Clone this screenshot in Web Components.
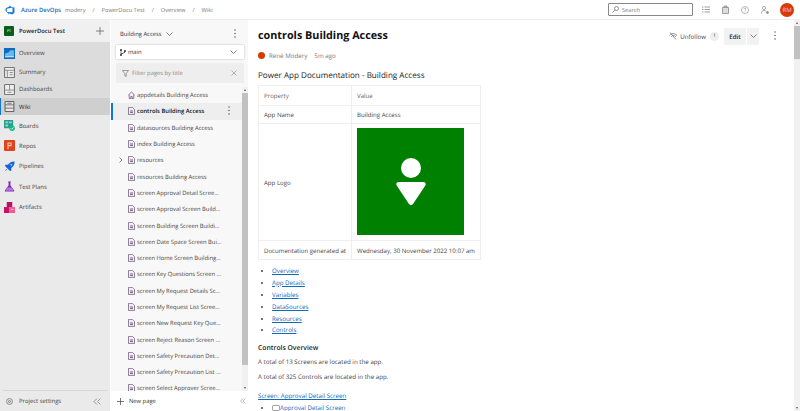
<!DOCTYPE html>
<html>
<head>
<meta charset="utf-8">
<title>Wiki</title>
<style>
  html, body { margin: 0; height: 100%; overflow: hidden; background: #fff; }
  body { font-family: "Open Sans", "Noto Sans", sans-serif; color: #333; display: flex; flex-direction: column; width: 800px; height: 411px; text-rendering: geometricPrecision; }
</style>
</head>
<body>

<app-header></app-header>

<app-shell>
  <nav-rail>
    <nav-item label="Overview" group top>
      <svg slot="icon" viewBox="0 0 10 10"><rect width="10" height="10" fill="#0f6cbd"/><path d="M1 8V5l3-1 2-2h3v6z" fill="#6bb7ee"/><path d="M1 8h8" stroke="#fff" stroke-width=".8"/></svg>
    </nav-item>
    <nav-item label="Summary" group>
      <svg slot="icon" viewBox="0 0 10 10" fill="none" stroke="#777"><rect x=".5" y=".5" width="9" height="9" rx=".5" fill="#eee"/><path d="M.5 3h9M3 3v6.5M5 5h3M5 7h3" stroke-width=".7"/></svg>
    </nav-item>
    <nav-item label="Dashboards" group>
      <svg slot="icon" viewBox="0 0 10 10" fill="none" stroke="#777"><rect x=".5" y=".5" width="9" height="9" rx=".5" fill="#eee"/><path d="M5 .5v5M.5 5.5h9M3 7.5h4" stroke-width=".7"/></svg>
    </nav-item>
    <nav-item label="Wiki" group selected>
      <svg slot="icon" viewBox="0 0 10 10" fill="none" stroke="#666"><rect x="1" y=".5" width="8" height="9" rx=".5" fill="#e6e6e6"/><path d="M1 3.500h8M1 6.500h8M3 2h4" stroke-width=".8"/></svg>
    </nav-item>
    <nav-item label="Boards">
      <svg slot="icon" viewBox="0 0 12 12"><path d="M0 0h10v9H0z" fill="#2b9d8f"/><path d="M1.500 1.500h3v2h-3zM5.500 1.500h3v2h-3zM1.500 5h3v2h-3z" fill="#8fd6cb"/><circle cx="8.800" cy="9" r="3" fill="#12b886"/><path d="M7.300 9l1.100 1.100 2-2" stroke="#fff" stroke-width=".9" fill="none"/></svg>
    </nav-item>
    <nav-item label="Repos">
      <svg slot="icon" viewBox="0 0 11 11"><rect width="11" height="11" rx="1" fill="#e0431c"/><path d="M4 9V3h3v2.600H4.400" stroke="#ffc6b0" stroke-width="1.100" fill="none"/></svg>
    </nav-item>
    <nav-item label="Pipelines">
      <svg slot="icon" viewBox="0 0 12 12"><path d="M11.500.5c.3 3-1 5.300-3.600 7.200L8 11 5.800 10.300 3.800 8.300 1.800 6.200 1 4l3.200.1C6.200 1.600 8.500.3 11.500.5z" fill="#1565d8"/><path d="M2.700 8.600 3.500 9.400.5 11.500z" fill="#1565d8"/><circle cx="8" cy="4" r="1.100" fill="#9cc6f5"/></svg>
    </nav-item>
    <nav-item label="Test Plans">
      <svg slot="icon" viewBox="0 0 12 12"><path d="M4.500.5h3v1h-.5v3l4 5.800c.4.700 0 1.200-.7 1.200H1.700c-.7 0-1.100-.5-.7-1.200l4-5.800v-3h-.5z" fill="#7b2fb0"/><path d="M3.400 7h5.200l1.600 3.500H1.800z" fill="#b374dd"/></svg>
    </nav-item>
    <nav-item label="Artifacts">
      <svg slot="icon" viewBox="0 0 12 12"><path d="M3 0h6v5.500H3z" fill="#b3135f"/><path d="M0 5.500h6V12H0z" fill="#c4145f"/><path d="M6 5.500h6V12H6z" fill="#ef5a93"/><path d="M7.800 7.500h2.400v1.300H7.800z" fill="#fbc0d6"/></svg>
    </nav-item>
  </nav-rail>

  <wiki-tree>
    <tree-item icon="home">appdetails Building Access</tree-item>
    <tree-item selected>controls Building Access</tree-item>
    <tree-item>datasources Building Access</tree-item>
    <tree-item>index Building Access</tree-item>
    <tree-item expandable>resources</tree-item>
    <tree-item>resources Building Access</tree-item>
    <tree-item>screen Approval Detail Scree…</tree-item>
    <tree-item>screen Approval Screen Build…</tree-item>
    <tree-item>screen Building Screen Buildi…</tree-item>
    <tree-item>screen Date Space Screen Bui…</tree-item>
    <tree-item>screen Home Screen Building…</tree-item>
    <tree-item>screen Key Questions Screen …</tree-item>
    <tree-item>screen My Request Details Sc…</tree-item>
    <tree-item>screen My Request List Scree…</tree-item>
    <tree-item>screen New Request Key Que…</tree-item>
    <tree-item>screen Reject Reason Screen …</tree-item>
    <tree-item>screen Safety Precaution Det…</tree-item>
    <tree-item>screen Safety Precaution List …</tree-item>
    <tree-item>screen Select Approver Scree…</tree-item>
  </wiki-tree>

  <wiki-page></wiki-page>
</app-shell>

<script>
const kebab = `<svg width="2" height="9" viewBox="0 0 2 9" fill="#666"><circle cx="1" cy="1" r=".8"/><circle cx="1" cy="4.500" r=".8"/><circle cx="1" cy="8" r=".8"/></svg>`
const chevronDown = `<svg width="7" height="4" viewBox="0 0 7 4" fill="none" stroke="#666" stroke-width=".8"><path d="M.5.5l3 3 3-3"/></svg>`

class AppHeader extends HTMLElement {
  constructor() {
    super()
    this.attachShadow({ mode: 'open' }).innerHTML = `
      <style>
      :host { display: flex; align-items: center; height: 20px; flex: none; font-size: 5.700px; color: #777; background: #fff; border-bottom: 1px solid #eee; box-sizing: border-box; }
      .logo { margin: 0 6px 0 5px; flex: none; }
      .brand { color: #0f6cbd; font-weight: 600; font-size: 5.900px; margin-right: 4px; }
      .crumbs { display: flex; gap: 7px; }
      .search { margin-left: auto; width: 85px; height: 13px; box-sizing: border-box; border: 1px solid #888; border-radius: 1px; display: flex; align-items: center; gap: 3px; padding-left: 3px; }
      .tools { display: flex; align-items: center; margin: 0 6px 0 9px; gap: 12px; }
      .tools svg { display: block; }
      .avatar { width: 14px; height: 14px; border-radius: 50%; background: #d83b01; color: #fbd; font-size: 6px; display: flex; align-items: center; justify-content: center; margin-left: -1px; }
      </style>
      <svg class="logo" width="10" height="10" viewBox="0 0 18 18" fill="#0f78d4"><path d="M17 4v9.740l-4 3.280-6.200-2.260V17l-3.510-4.590 10.230.8V4.440zm-3.410.49L7.850 1v2.270L2.580 4.820 1 6.850v4.610l2.260 1V6.570z"/></svg>
      <span class="brand">Azure DevOps</span>
      <div class="crumbs"><span>modery</span><span>/</span><span>PowerDocu Test</span><span>/</span><span>Overview</span><span>/</span><span>Wiki</span></div>
      <div class="search">
        <svg width="7" height="7" viewBox="0 0 7 7" fill="none" stroke="#666" stroke-width=".7"><circle cx="4.500" cy="2.500" r="2"/><path d="M3 4L.5 6.500"/></svg>
        <span>Search</span>
      </div>
      <div class="tools">
        <svg width="8" height="7" viewBox="0 0 8 7" fill="none" stroke="#888" stroke-width=".8"><path d="M0 1h1.500M0 3.500h1.500M0 6h1.500M2.500 1H8M2.500 3.500H8M2.500 6H8"/></svg>
        <svg width="7" height="9" viewBox="0 0 7 9" fill="#ddd" stroke="#888" stroke-width=".8"><path d="M.5 2.500h6v6h-6zM2 2.500V1h3v1.500"/></svg>
        <svg width="8" height="8" viewBox="0 0 8 8" fill="none" stroke="#999" stroke-width=".7"><circle cx="4" cy="4" r="3.500"/><path d="M3 3c0-1.300 2-1.300 2 0 0 .8-1 .8-1 1.600M4 5.500v.6"/></svg>
        <svg width="8" height="8" viewBox="0 0 8 8" fill="none" stroke="#888" stroke-width=".7"><circle cx="3" cy="2" r="1.600"/><path d="M.5 7.500C.5 5.500 1.500 4.500 3 4.500s2 .5 2.300 1.200"/><circle cx="6.500" cy="6.500" r="1" fill="#888"/></svg>
        <div class="avatar">RM</div>
      </div>`
  }
}
customElements.define('app-header', AppHeader)

class AppShell extends HTMLElement {
  constructor() {
    super()
    this.attachShadow({ mode: 'open' }).innerHTML = `
      <style>:host { display: flex; flex: 1; min-height: 0; overflow: hidden; }</style>
      <slot></slot>`
  }
}
customElements.define('app-shell', AppShell)

class NavRail extends HTMLElement {
  constructor() {
    super()
    this.attachShadow({ mode: 'open' }).innerHTML = `
      <style>
      :host { display: flex; flex-direction: column; width: 110px; flex: none; background: #eaeaea; font-size: 5.900px; }
      .project { display: flex; align-items: center; height: 23px; box-sizing: border-box; padding: 0 5px 0 4px; background: #f0f0f0; font-weight: 600; color: #222; border-bottom: 1px solid #ddd; }
      .tile { width: 10px; height: 10px; background: #0b5d1e; color: #cfe; font-size: 3.500px; display: flex; align-items: center; justify-content: center; margin-right: 5px; border-radius: 1px; }
      .plus { margin-left: auto; margin-right: 1px; }
      .items { flex: 1; }
      .foot { height: 20px; margin: 0 3px; border-top: 1px solid #d6d6d6; display: flex; align-items: center; padding: 0 6px 0 3px; color: #444; }
      .foot span { margin-left: 6px; }
      .foot .fold { margin-left: auto; }
      </style>
      <div class="project">
        <div class="tile">PT</div>
        <span>PowerDocu Test</span>
        <svg class="plus" width="8" height="8" viewBox="0 0 8 8" stroke="#666" stroke-width=".8"><path d="M4 0v8M0 4h8"/></svg>
      </div>
      <div class="items"><slot></slot></div>
      <div class="foot">
        <svg width="7" height="7" viewBox="0 0 7 7" fill="#ddd" stroke="#777" stroke-width=".7"><circle cx="3.500" cy="3.500" r="3"/><circle cx="3.500" cy="3.500" r="1"/></svg>
        <span>Project settings</span>
        <svg class="fold" width="8" height="7" viewBox="0 0 8 7" fill="none" stroke="#777" stroke-width=".7"><path d="M4 .5L1 3.500l3 3M7.500.5l-3 3 3 3"/></svg>
      </div>`
  }
}
customElements.define('nav-rail', NavRail)

class NavItem extends HTMLElement {
  constructor() {
    super()
    this.attachShadow({ mode: 'open' }).innerHTML = `
      <style>
      :host { display: flex; align-items: center; height: 20.400px; padding-left: 4px; box-sizing: border-box; color: #444; }
      :host([group]) { height: 17.300px; background: #dcdcdc; }
      :host([top]) { height: 20.500px; }
      :host([selected]) { background: #cfcfcf; box-shadow: inset 1px 0 0 #0f78d4; color: #222; }
      ::slotted(svg) { width: 11px; height: 11px; display: block; }
      .icon { width: 11px; height: 11px; display: flex; align-items: center; justify-content: center; margin-right: 4px; }
      </style>
      <span class="icon"><slot name="icon"></slot></span>
      <span class="label"></span>`
    this.shadowRoot.querySelector('.label').textContent = this.getAttribute('label')
  }
}
customElements.define('nav-item', NavItem)

class ScrollBar extends HTMLElement {
  constructor() {
    super()
    this.attachShadow({ mode: 'open' }).innerHTML = `
      <style>
      :host { display: flex; flex-direction: column; width: 6px; flex: none; background: #f1f1f1; }
      .arrow { height: 6px; display: flex; align-items: center; justify-content: center; flex: none; }
      .arrow i { border: 1.500px solid transparent; border-bottom: 2px solid #555; border-top: 0; display: block; }
      .arrow.down i { border-bottom: 0; border-top: 2px solid #555; }
      .gap { flex: 1; }
      .thumb { background: #c1c1c1; flex: none; }
      </style>
      <div class="arrow"><i></i></div>
      <div class="thumb"></div>
      <div class="gap"></div>
      <div class="arrow down"><i></i></div>`
    this.shadowRoot.querySelector('.thumb').style.height = this.getAttribute('thumb') + 'px'
  }
}
customElements.define('scroll-bar', ScrollBar)

class WikiTree extends HTMLElement {
  constructor() {
    super()
    this.attachShadow({ mode: 'open' }).innerHTML = `
      <style>
      :host { display: flex; flex-direction: column; width: 137px; flex: none; background: #f8f8f8; font-size: 5.800px; margin-left: 1px; margin-right: 2px; box-sizing: border-box; }
      .title { display: flex; align-items: center; height: 25px; flex: none; padding: 3px 12px 0 9px; color: #333; font-weight: 500; box-sizing: border-box; }
      .title span { margin-right: 5px; }
      .title .more { margin-left: auto; margin-right: 0; }
      .branch { display: flex; align-items: center; height: 14px; margin: 0 4px 0 5px; background: #fff; box-shadow: 0 0 2px #bbb; padding: 0 7px 0 4px; flex: none; color: #333; font-weight: 500; }
      .branch span { margin-left: 2px; }
      .branch svg:last-child { margin-left: auto; }
      .filter { display: flex; align-items: center; height: 20px; margin: 4px 4px 4px 5px; background: #eeeeee; padding: 0 7px 0 6px; color: #888; flex: none; }
      .filter span { margin-left: 3px; }
      .filter .clear { margin-left: auto; }
      .body { display: flex; flex: 1; min-height: 0; overflow: hidden; }
      .list { flex: 1; min-width: 0; overflow: hidden; }
      .foot { display: flex; align-items: center; height: 20px; flex: none; background: #fff; padding: 0 4px 0 6px; margin-right: -2px; color: #333; font-weight: 500; }
      .foot span { margin-left: 5px; }
      .foot svg:last-child { margin-left: auto; }
      </style>
      <div class="title"><span>Building Access</span>${chevronDown}<span class="more">${kebab}</span></div>
      <div class="branch">
        <svg width="6" height="7" viewBox="0 0 6 7" fill="#333"><circle cx="1" cy="1" r="1"/><circle cx="1" cy="6" r="1"/><circle cx="5" cy="2" r="1"/><path d="M.7 1h.6v5H.7zM1 4c2 0 3.700-.3 3.700-2h.6c0 2.500-2.300 2.700-4.300 2.700z"/></svg>
        <span>main</span>
        ${chevronDown}
      </div>
      <div class="filter">
        <svg width="7" height="7" viewBox="0 0 7 7" fill="none" stroke="#777" stroke-width=".7"><path d="M.4.5h6.200L4.200 3.500v3L2.800 5.600V3.500z"/></svg>
        <span>Filter pages by title</span>
        <svg class="clear" width="6" height="6" viewBox="0 0 6 6" stroke="#999" stroke-width=".7"><path d="M.5.5l5 5M5.500.5l-5 5"/></svg>
      </div>
      <div class="body">
        <div class="list"><slot></slot></div>
        <scroll-bar thumb="272"></scroll-bar>
      </div>
      <div class="foot">
        <svg width="7" height="7" viewBox="0 0 7 7" stroke="#555" stroke-width=".8"><path d="M3.500 0v7M0 3.500h7"/></svg>
        <span>New page</span>
        <svg width="6" height="6" viewBox="0 0 6 6" fill="none" stroke="#999" stroke-width=".6"><path d="M3 .5L.5 3 3 5.500M5.500.5L3 3l2.500 2.500"/></svg>
      </div>`
  }
}
customElements.define('wiki-tree', WikiTree)

const pageIcon = `<svg width="7" height="8" viewBox="0 0 7 8" fill="#f3eef6" stroke="#6a4a7a" stroke-width=".7"><path d="M.5.4h4l2 2v5.200h-6z"/><path d="M2 4h3M2 5.600h3" stroke="#333"/></svg>`
const homeIcon = `<svg width="7" height="8" viewBox="0 0 7 8" fill="#f3eef6" stroke="#6a4a7a" stroke-width=".7"><path d="M.4 4L3.500 1l3.100 3M1.200 3.500v4h4.600v-4"/><path d="M2.800 7.500V5.500h1.400v2"/></svg>`

class TreeItem extends HTMLElement {
  constructor() {
    super()
    this.attachShadow({ mode: 'open' }).innerHTML = `
      <style>
      :host { display: flex; align-items: center; height: 16.300px; padding-left: 17px; margin-right: 0; color: #444; white-space: nowrap; position: relative; box-sizing: border-box; }
      :host([selected]) { background: #eeeeee; color: #111; font-weight: 600; box-shadow: inset 2px 0 0 #0f78d4; }
      .ico { width: 7px; height: 8px; margin-right: 2px; display: block; flex: none; }
      .ico svg { display: block; }
      .more { display: none; margin-left: auto; margin-right: 12px; }
      :host([selected]) .more { display: block; }
      .exp { display: none; position: absolute; left: 8px; top: 5px; }
      :host([expandable]) .exp { display: block; }
      </style>
      <svg class="exp" width="4" height="6" viewBox="0 0 4 6" fill="none" stroke="#666" stroke-width=".8"><path d="M.5.5L3 3 .5 5.500"/></svg>
      <span class="ico">${this.getAttribute('icon') === 'home' ? homeIcon : pageIcon}</span>
      <slot></slot>
      <span class="more">${kebab}</span>`
  }
}
customElements.define('tree-item', TreeItem)

class InfoTable extends HTMLElement {
  constructor() {
    super()
    this.attachShadow({ mode: 'open' }).innerHTML = `
      <style>
      :host { display: block; width: 223px; font-size: 6.100px; color: #444; }
      table { border-collapse: collapse; width: 100%; table-layout: fixed; }
      td { border: 1px solid #eee; padding: 0 5px; white-space: nowrap; }
      td:first-child { width: 82px; }
      tr { height: 18px; }
      tr.head { height: 20px; color: #666; }
      tr.tail { height: 19px; }
      .logo { width: 107px; height: 107px; background: #008000; display: flex; flex-direction: column; align-items: center; justify-content: center; margin: 4px 0 5px; }
      </style>
      <table>
        <tr class="head"><td>Property</td><td>Value</td></tr>
        <tr><td>App Name</td><td>Building Access</td></tr>
        <tr>
          <td>App Logo</td>
          <td>
            <div class="logo">
              <svg width="30" height="48" viewBox="0 0 30 48" fill="#fff">
                <circle cx="15" cy="10" r="10"/>
                <path d="M3 24h24c2.500 0 3.500 1.800 2 4L17 46c-1 1.500-3 1.500-4 0L1 28c-1.500-2.200-.5-4 2-4z"/>
              </svg>
            </div>
          </td>
        </tr>
        <tr class="tail"><td>Documentation generated at</td><td>Wednesday, 30 November 2022 10:07 am</td></tr>
      </table>`
  }
}
customElements.define('info-table', InfoTable)

class WikiPage extends HTMLElement {
  constructor() {
    super()
    this.attachShadow({ mode: 'open' }).innerHTML = `
      <style>
      :host { display: flex; flex: 1; min-width: 0; background: #fff; font-size: 6.200px; color: #444; overflow: hidden; }
      .page { flex: 1; min-width: 0; padding: 0 0 0 8px; overflow: hidden; }
      .top { display: flex; align-items: center; height: 24px; margin-top: 4px; padding-right: 18px; }
      h1 { margin: 0; font-size: 10.800px; font-weight: 700; color: #111; line-height: 24px; }
      .actions { margin-left: auto; display: flex; align-items: center; color: #444; font-weight: 500; }
      .actions .follow { margin: 0 4px 0 2px; }
      .badge { width: 9px; height: 9px; border-radius: 50%; background: #eee; font-size: 5px; display: flex; align-items: center; justify-content: center; margin-right: 5px; }
      .btn { background: #f2f2f2; height: 17px; display: flex; align-items: center; justify-content: center; }
      .edit { width: 22px; color: #222; font-weight: 600; margin-right: 1px; }
      .drop { width: 12px; }
      .actions .more { margin-left: 15px; display: block; }
      .meta { display: flex; align-items: center; height: 12px; margin-top: 1px; color: #777; }
      .dot { width: 7px; height: 7px; border-radius: 50%; background: #d83b01; margin-right: 4px; }
      .meta .ago { margin-left: 7px; }
      h2 { margin: 9px 0 3px; font-size: 8.100px; line-height: 12px; font-weight: 500; color: #222; }
      ul { margin: 5px 0 0; padding: 0 0 0 14px; }
      li { height: 11.900px; line-height: 11.900px; }
      li::marker { font-size: 6px; }
      a { color: #0f6cbd; text-decoration: underline; }
      h3 { margin: 6px 0 2px; font-size: 6.800px; line-height: 12px; font-weight: 600; color: #222; }
      p { margin: 0; line-height: 12px; }
      p + p { margin-top: 3px; }
      .screen { margin-top: 7px; font-weight: 500; }
      .sub { margin-top: 0; padding-left: 14px; }
      .sub svg { vertical-align: -0.500px; }
      </style>
      <div class="page">
        <div class="top">
          <h1>controls Building Access</h1>
          <div class="actions">
            <svg width="9" height="8" viewBox="0 0 9 8" fill="none" stroke="#666" stroke-width=".7"><path d="M.5 3.500C2 1 6 1 8 3.500M2 5C3.500 3 5.500 3 7 5M1 .5L7 7.500"/></svg>
            <span class="follow">Unfollow</span>
            <span class="badge">1</span>
            <span class="btn edit">Edit</span>
            <span class="btn drop">${chevronDown}</span>
            <span class="more">${kebab}</span>
          </div>
        </div>
        <div class="meta"><span class="dot"></span><span>René Modery</span><span class="ago">5m ago</span></div>
        <h2>Power App Documentation - Building Access</h2>
        <info-table></info-table>
        <ul>
          <li><a>Overview</a></li>
          <li><a>App Details</a></li>
          <li><a>Variables</a></li>
          <li><a>DataSources</a></li>
          <li><a>Resources</a></li>
          <li><a>Controls</a></li>
        </ul>
        <h3>Controls Overview</h3>
        <p>A total of 13 Screens are located in the app.</p>
        <p>A total of 325 Controls are located in the app.</p>
        <p class="screen"><a>Screen: Approval Detail Screen</a></p>
        <ul class="sub">
          <li><svg width="8" height="6" viewBox="0 0 8 6" fill="none" stroke="#666" stroke-width=".6"><rect x=".5" y=".5" width="7" height="5" rx=".8"/></svg><a>Approval Detail Screen</a></li>
        </ul>
      </div>
      <scroll-bar thumb="33"></scroll-bar>`
  }
}
customElements.define('wiki-page', WikiPage)
</script>
</body>
</html>
